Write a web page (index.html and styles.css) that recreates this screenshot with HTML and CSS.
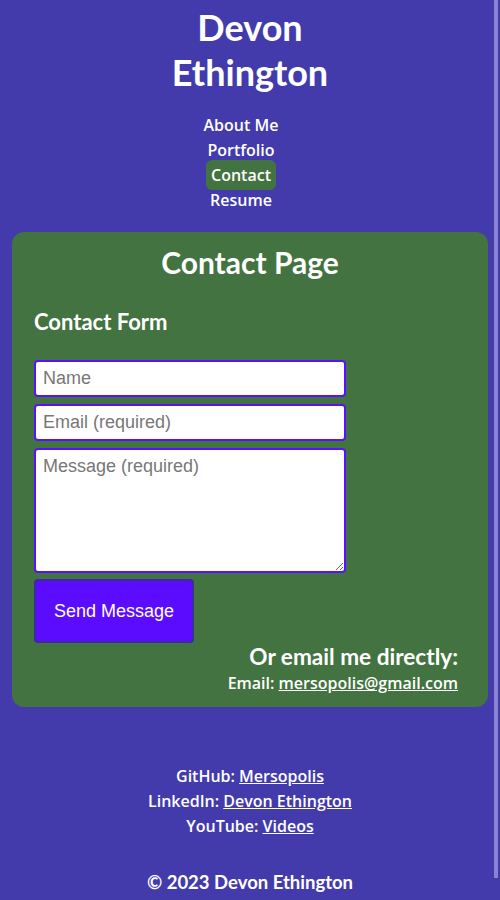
FILE: index.html
```html
<!DOCTYPE html>
<html lang="en">
<head>
<meta charset="utf-8">
<title>Devon Ethington - Contact</title>
<link rel="stylesheet" href="styles.css">
</head>
<body>
<header class="header">
  <h1 class="site-title">Devon Ethington</h1>
  <nav class="nav">
    <a class="nav-link" href="#">About Me</a>
    <a class="nav-link" href="#">Portfolio</a>
    <a class="nav-link active" href="#">Contact</a>
    <a class="nav-link" href="#">Resume</a>
  </nav>
</header>
<main class="card">
  <h2 class="page-title">Contact Page</h2>
  <h3 class="form-title">Contact Form</h3>
  <form class="form">
    <input class="field" type="text" placeholder="Name">
    <input class="field" type="email" placeholder="Email (required)">
    <textarea class="field area" placeholder="Message (required)"></textarea>
    <button class="send" type="button">Send Message</button>
  </form>
  <div class="direct">
    <h3 class="direct-title">Or email me directly:</h3>
    <p class="direct-line">Email: <a href="#">mersopolis@gmail.com</a></p>
  </div>
</main>
<footer class="footer">
  <p class="social">GitHub: <a href="#">Mersopolis</a></p>
  <p class="social">LinkedIn: <a href="#">Devon Ethington</a></p>
  <p class="social">YouTube: <a href="#">Videos</a></p>
  <p class="copy">© 2023 Devon Ethington</p>
</footer>
<div class="scrollbar"></div>
</body>
</html>
```
FILE: styles.css
```css
html, body {
  margin: 0;
  padding: 0;
}
body {
  background: #433bab;
  color: #ffffff;
  font-family: Lato, "Liberation Sans", sans-serif;
  padding: 0 12px;
}
.header {
  display: flex;
  flex-direction: column;
  align-items: center;
}
.site-title {
  margin: 5px 0 0;
  width: 170px;
  text-align: center;
  font-size: 36px;
  line-height: 45px;
  font-weight: 700;
}
.nav {
  display: flex;
  flex-direction: column;
  align-items: center;
  margin-top: 18px;
  padding-right: 18px;
  font-family: "Open Sans", sans-serif;
}
.nav-link {
  color: #ffffff;
  text-decoration: none;
  font-size: 16px;
  line-height: 25px;
  font-weight: 600;
  padding: 0 5px;
  border-radius: 6px;
}
.nav-link.active {
  background: #427340;
  line-height: 30px;
  margin: -3px 0 -2px;
}
.card {
  margin-top: 19px;
  background: #427340;
  border-radius: 12px;
  padding: 12px 22px 12px 22px;
}
.page-title {
  margin: 0;
  text-align: center;
  font-size: 30px;
  line-height: 36px;
  font-weight: 700;
}
.form-title {
  margin: 28px 0 24px;
  font-size: 22px;
  line-height: 28px;
  font-weight: 700;
}
.form {
  display: flex;
  flex-direction: column;
  align-items: flex-start;
  gap: 7px;
}
.field {
  box-sizing: border-box;
  width: 312px;
  height: 37px;
  border: 2px solid #5a10ff;
  border-radius: 4px;
  padding: 0 7px;
  font-family: "Liberation Sans", Arial, sans-serif;
  font-size: 18px;
  color: #333;
  background: #fff;
  margin: 0;
}
.field::placeholder {
  color: #777;
}
.area {
  height: 125px;
  padding-top: 6px;
  resize: vertical;
}
.send {
  margin-top: -1px;
  width: 160px;
  height: 64px;
  background: #5b0cff;
  color: #fff;
  border: 2px solid #3d2aa0;
  border-radius: 4px;
  font-family: "Liberation Sans", Arial, sans-serif;
  font-size: 18px;
}
.direct {
  text-align: right;
  margin-right: 8px;
}
.direct-title {
  margin: 0;
  font-size: 22.6px;
  line-height: 28px;
  font-weight: 700;
}
.direct-line {
  margin: 0;
  font-family: "Open Sans", sans-serif;
  font-weight: 600;
  font-size: 16px;
  line-height: 24px;
}
.direct-line a, .social a {
  color: #fff;
}
.footer {
  margin-top: 57px;
  text-align: center;
}
.social {
  margin: 0;
  font-family: "Open Sans", sans-serif;
  font-weight: 600;
  font-size: 16px;
  line-height: 25px;
}
.copy {
  margin: 31px 0 0;
  font-size: 18.5px;
  font-weight: 700;
  line-height: 24px;
}
.scrollbar {
  position: fixed;
  top: 0;
  right: 2px;
  width: 4px;
  height: 878px;
  background: #8a84d0;
}
```
